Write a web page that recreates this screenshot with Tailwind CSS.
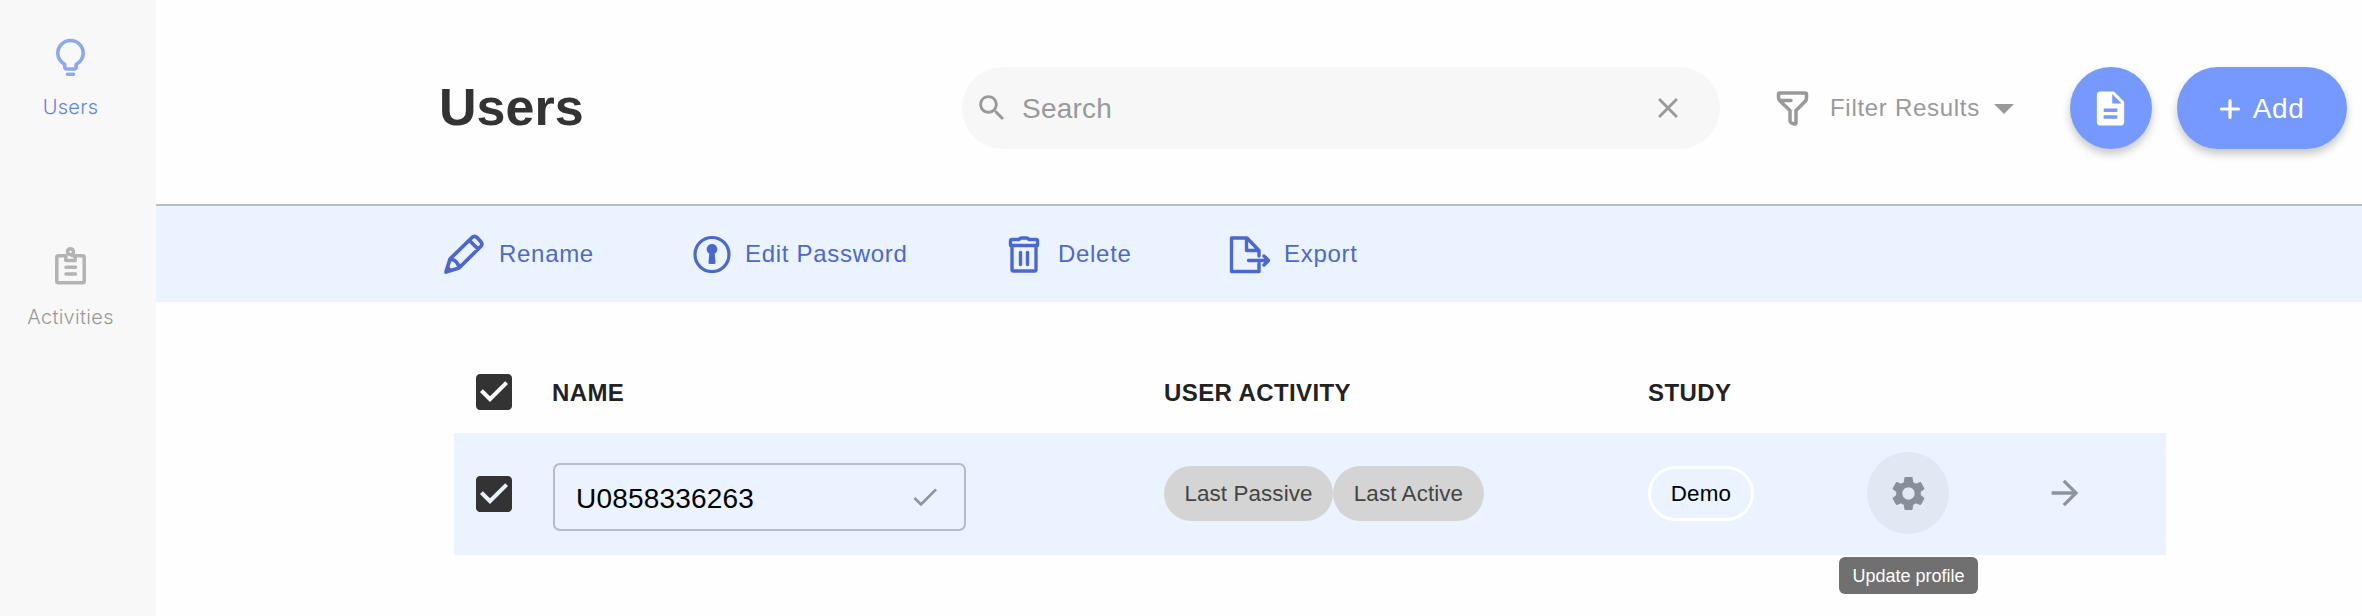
<!DOCTYPE html>
<html lang="en">
<head>
<meta charset="utf-8">
<title>Users</title>
<script src="https://cdn.jsdelivr.net/npm/@tailwindcss/browser@4"></script>
</head>
<body class="flex h-[616px] w-[2362px] overflow-hidden bg-[#fefefe] font-['Liberation_Sans',Arial,sans-serif]">
<nav class="flex w-[156px] shrink-0 flex-col items-center bg-[#f8f8f8] pl-px pr-4">
  <a class="mt-[36px] flex h-[210px] flex-col items-center text-[#6083e7]">
    <svg class="h-[43px] w-[43px] text-[#8ba9f0]" viewBox="0 0 43 43" fill="none" stroke="currentColor" stroke-width="3.600" stroke-linecap="round" stroke-linejoin="round"><path d="M15.800 31v-2.500Q8.800 24 8.800 17.200a12.700 12.700 0 0 1 25.400 0Q34.200 24 27.200 28.500V31q0 2-2 2h-7.400q-2 0-2-2zM18.500 38.300h6"/></svg>
    <span class="mt-[15px] font-[Inter] text-[20px] font-light leading-[26px] tracking-[0.300px]">Users</span>
  </a>
  <a class="flex flex-col items-center text-[#999]">
    <svg class="h-[43px] w-[43px] text-[#b3b3b3]" viewBox="0 0 43 43" fill="none" stroke="currentColor" stroke-width="3.500" stroke-linecap="round" stroke-linejoin="round"><path d="M16 9.800H9.300q-1.500 0-1.500 1.500V35.200q0 1.500 1.500 1.500H33.700q1.500 0 1.500-1.500V11.300q0-1.500-1.500-1.500H27M17 21.300h9.500M17 28h9.500M16.800 9.800V14.500h9.400V9.800H23.500"/><circle cx="21.500" cy="5.700" r="3"/></svg>
    <span class="mt-[15px] font-[Inter] text-[20px] font-light leading-[26px] tracking-[0.300px]">Activities</span>
  </a>
</nav>
<main class="flex grow flex-col">
  <header class="flex h-[206px] items-center border-b-2 border-[#bbbdbe] pl-[283px] pt-[12px]">
    <h1 class="mb-[2px] w-[523px] text-[52px] font-bold leading-[60px] text-[#333]">Users</h1>
    <div class="flex h-[82px] w-[758px] items-center rounded-full bg-[#f7f7f7] pl-[13px] pr-[35px] text-[#999]">
      <svg class="h-[34px] w-[34px]" viewBox="0 0 24 24" fill="currentColor"><path d="M15.500 14h-.790l-.280-.270C15.410 12.590 16 11.110 16 9.500 16 5.910 13.090 3 9.500 3S3 5.910 3 9.500 5.910 16 9.500 16c1.610 0 3.090-.590 4.230-1.570l.270.280v.790l5 4.990L20.490 19l-4.990-5zm-6 0C7.010 14 5 11.990 5 9.500S7.010 5 9.500 5 14 7.010 14 9.500 11.990 14 9.500 14z"/></svg>
      <span class="ml-[13px] grow pt-[2px] text-[28px] leading-[32px] tracking-[0.200px]">Search</span>
      <svg class="h-[34px] w-[34px]" viewBox="0 0 24 24" fill="currentColor"><path d="M19 6.410 17.590 5 12 10.590 6.410 5 5 6.410 10.590 12 5 17.590 6.410 19 12 13.410 17.590 19 19 17.590 13.410 12z"/></svg>
    </div>
    <div class="ml-[55px] flex items-center text-[#999]">
      <svg class="h-[36px] w-[36px]" viewBox="0 0 36 36" fill="none" stroke="currentColor" stroke-width="3.500" stroke-linejoin="round" stroke-linecap="round"><path d="M4 3h26q1.500 0 1.500 1.500V8q0 2-1.500 3.500L21 20.500V33q0 1.500-2 1l-2.500-1Q15 32.500 15 31V20.500L5 11Q3.500 9.500 3.500 7.500V4.500Q3.500 3 5 3M4.500 10.500H16"/></svg>
      <span class="ml-[19px] text-[24px] leading-[30px] tracking-[0.7px]">Filter Results</span>
      <svg class="ml-[14px] mt-[2px] h-[10px] w-[20px]" viewBox="0 0 20 10" fill="currentColor"><path d="M0 0h20L10 10z"/></svg>
    </div>
    <div class="ml-[56px] flex h-[82px] w-[82px] items-center justify-center rounded-full bg-[#7599ff] text-white shadow-[0_5px_9px_rgba(0,0,0,0.22)]">
      <svg class="h-[41px] w-[41px]" viewBox="0 0 24 24" fill="currentColor"><path d="M14 2H6c-1.100 0-1.990.900-1.990 2L4 20c0 1.100.890 2 1.990 2H18c1.100 0 2-.900 2-2V8l-6-6zm2 16H8v-2h8v2zm0-4H8v-2h8v2zm-3-5V3.500L18.500 9H13z"/></svg>
    </div>
    <div class="ml-[25px] flex h-[82px] w-[170px] items-center rounded-full bg-[#7599ff] pl-[38px] text-white shadow-[0_5px_9px_rgba(0,0,0,0.22)]">
      <svg class="mt-[2px] h-[30px] w-[30px]" viewBox="0 0 30 30" fill="none" stroke="currentColor" stroke-width="3.200" stroke-linecap="round"><path d="M15 6.500v17M6.500 15h17"/></svg>
      <span class="ml-[8px] pt-px text-[28px] leading-[32px] tracking-[0.6px]">Add</span>
    </div>
  </header>
  <div class="flex h-[96px] items-center bg-[#eaf3ff] pl-[288px] text-[24px] leading-[30px] tracking-[0.7px] text-[#4c68d0]">
    <div class="flex w-[249px] items-center gap-[15px]">
      <svg class="h-[40px] w-[40px]" viewBox="0 0 40 40" fill="none" stroke="currentColor" stroke-width="3.700" stroke-linejoin="round"><path d="M2 38 6 25 28 3.500q2.500-2.200 5 0L36.700 7.500q2.300 2.500 0 5L15 34zM6 25q8 1 9 9M25.500 6.500l8.500 8.500"/><path d="M.500 39.500l2.500-9 6.500 6.500z" fill="currentColor" stroke="none"/></svg>
      <span>Rename</span>
    </div>
    <div class="flex w-[315px] items-center gap-[14px]">
      <svg class="h-[38px] w-[38px]" viewBox="0 0 38 38" fill="none" stroke="currentColor" stroke-width="3.200"><circle cx="19" cy="19.500" r="17"/><path fill="currentColor" stroke="none" d="M19 9a5.300 5.300 0 0 1 2.800 9.800l.700 8.700q0 1.500-1.500 1.500h-4q-1.500 0-1.500-1.500l.700-8.700A5.300 5.300 0 0 1 19 9z"/></svg>
      <span>Edit Password</span>
    </div>
    <div class="flex w-[220px] items-center gap-[18px]">
      <svg class="h-[38px] w-[32px]" viewBox="0 0 32 38" fill="none" stroke="currentColor" stroke-width="3.400" stroke-linejoin="round" stroke-linecap="round"><path d="M4 11v23.500q0 1.500 1.500 1.500h21q1.500 0 1.500-1.500V11M12.500 17.500v12M19.500 17.500v12M2.500 10.500V6q0-1.500 1.500-1.500h7q1-1.500 2.500-1.500h5q1.500 0 2.500 1.500h7q1.500 0 1.500 1.500v4.500z"/></svg>
      <span>Delete</span>
    </div>
    <div class="flex items-center gap-[14px]">
      <svg class="h-[40px] w-[42px]" viewBox="0 0 42 40" fill="none" stroke="currentColor" stroke-width="3.400" stroke-linejoin="round" stroke-linecap="round"><path d="M31 29.500V37.500H3.500V4H19L31 16.500V22M18.500 4.500v12h12M20.500 26.500H40M36 22l4.500 4.500-4.500 4.500"/></svg>
      <span>Export</span>
    </div>
  </div>
  <section class="ml-[298px] w-[1712px]">
    <div class="flex h-[131px] items-center pt-[49px] text-[24px] font-bold leading-[30px] tracking-[0.400px] text-[#222]">
      <div class="w-[98px] pl-[16px]"><svg class="h-[48px] w-[48px]" viewBox="0 0 24 24" fill="#333"><path d="M19 3H5c-1.110 0-2 .900-2 2v14c0 1.100.890 2 2 2h14c1.110 0 2-.900 2-2V5c0-1.100-.890-2-2-2zm-9 14-5-5 1.410-1.410L10 14.170l7.590-7.590L19 8l-9 9z"/></svg></div>
      <div class="w-[612px] pt-[2px]">NAME</div>
      <div class="w-[484px] pt-[2px]">USER ACTIVITY</div>
      <div class="pt-[2px]">STUDY</div>
    </div>
    <div class="flex h-[122px] items-center bg-[#eaf3ff]">
      <div class="w-[99px] pl-[16px]"><svg class="h-[48px] w-[48px]" viewBox="0 0 24 24" fill="#333"><path d="M19 3H5c-1.110 0-2 .900-2 2v14c0 1.100.890 2 2 2h14c1.110 0 2-.900 2-2V5c0-1.100-.890-2-2-2zm-9 14-5-5 1.410-1.410L10 14.170l7.590-7.590L19 8l-9 9z"/></svg></div>
      <div class="mt-[6px] flex h-[68px] w-[413px] items-center justify-between rounded-[7px] border-2 border-[#b4bac6] pl-[21px] pr-[23px] text-[28px] leading-[32px] tracking-[0.200px] text-black">
        <span class="pt-[3px]">U0858336263</span>
        <svg class="h-[32px] w-[32px] text-[#8e949e]" viewBox="0 0 24 24" fill="currentColor"><path d="M9 16.170 4.830 12l-1.420 1.410L9 19 21 7l-1.410-1.410z"/></svg>
      </div>
      <div class="mb-px ml-[198px] flex w-[484px] text-[22.400px] leading-[26px] tracking-[0.100px] text-[#444]">
        <span class="flex h-[55px] w-[169px] items-center justify-center rounded-full bg-[#d4d4d4]">Last Passive</span>
        <span class="flex h-[55px] w-[151px] items-center justify-center rounded-full bg-[#d4d4d4]">Last Active</span>
      </div>
      <div class="mb-px flex h-[55px] w-[106px] items-center justify-center rounded-full border-3 border-white text-[22.400px] tracking-[0.200px] text-black">Demo</div>
      <div class="relative mb-[2px] ml-[113px] flex h-[82px] w-[82px] items-center justify-center rounded-full bg-[#e1e8f4] text-[#898f98]">
        <svg class="h-[41px] w-[41px]" viewBox="0 0 24 24" fill="currentColor"><path d="M19.140 12.940c.040-.300.060-.610.060-.940 0-.320-.020-.640-.070-.940l2.030-1.580c.180-.140.230-.410.120-.610l-1.920-3.320c-.120-.220-.370-.290-.590-.220l-2.390.960c-.500-.380-1.030-.700-1.620-.940l-.360-2.540c-.040-.240-.240-.410-.480-.410h-3.840c-.240 0-.430.170-.470.410l-.360 2.540c-.590.240-1.130.570-1.620.940l-2.390-.960c-.220-.080-.470 0-.590.220L2.740 8.870c-.120.210-.080.470.120.610l2.030 1.580c-.050.300-.090.630-.090.940s.020.640.070.940l-2.030 1.580c-.180.140-.230.410-.120.610l1.920 3.320c.120.220.370.290.590.220l2.390-.960c.500.380 1.030.700 1.620.940l.360 2.540c.050.240.240.410.480.410h3.840c.240 0 .440-.170.470-.410l.360-2.540c.590-.240 1.130-.560 1.620-.940l2.390.960c.220.080.470 0 .590-.220l1.920-3.320c.120-.220.070-.470-.120-.610l-2.010-1.580zM12 15.600c-1.980 0-3.600-1.620-3.600-3.600s1.620-3.600 3.600-3.600 3.600 1.620 3.600 3.600-1.620 3.600-3.600 3.600z"/></svg>
        <div class="absolute left-[-28px] top-[105px] flex h-[37px] w-[139px] items-center justify-center rounded-[6px] bg-[#707070] text-[18px] leading-[22px] text-white">Update profile</div>
      </div>
      <svg class="mb-[2px] ml-[96px] h-[40px] w-[40px] text-[#8e949e]" viewBox="0 0 24 24" fill="currentColor"><path d="m12 4-1.410 1.410L16.170 11H4v2h12.170l-5.580 5.590L12 20l8-8z"/></svg>
    </div>
  </section>
</main>
</body>
</html>
